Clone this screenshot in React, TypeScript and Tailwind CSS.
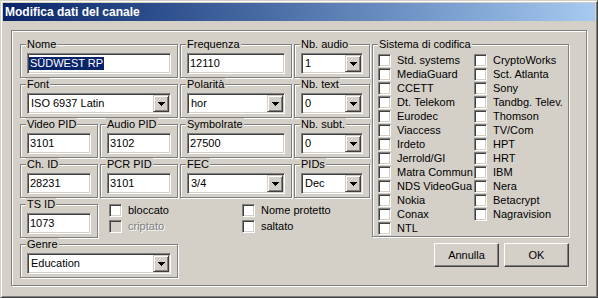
import React from "react"

const sunken = "border border-[#808080] border-b-white border-r-white shadow-[inset_1px_1px_0_#404040,inset_-1px_-1px_0_#d4d0c8]"
const raised = "border border-[#d4d0c8] border-b-[#404040] border-r-[#404040] shadow-[inset_1px_1px_0_#fff,inset_-1px_-1px_0_#808080]"

const Group = ({ label, className = "", children }: { label: string, className?: string, children?: React.ReactNode }) => (
    <div className={`relative shrink-0 border border-[#808080] shadow-[inset_1px_1px_0_#fff,1px_1px_0_#fff] ${className}`}>
        <span className="absolute left-[5px] top-[-7px] bg-[#d4d0c8] px-[1px] leading-[13px] whitespace-nowrap">{label}</span>
        {children}
    </div>
)

const Edit = ({ value, selected }: { value: string, selected?: boolean }) => (
    <div className={`h-[21px] bg-white flex items-center leading-[13px] ${selected ? 'pl-[1px]' : 'pl-[2px]'} ${sunken}`}>
        {selected ? <span className="bg-[#0a246a] text-white px-[1px]">{value}</span> : value}
    </div>
)

const Arrow = () => (
    <svg width="7" height="4" viewBox="0 0 7 4" shapeRendering="crispEdges">
        <path d="M0 0h7v1H0zM1 1h5v1H1zM2 2h3v1H2zM3 3h1v1H3z" fill="#000" />
    </svg>
)

const Combo = ({ value }: { value: string }) => (
    <div className={`h-[21px] bg-white flex items-center leading-[13px] pl-[3px] ${sunken}`}>
        <span className="flex-1 whitespace-nowrap">{value}</span>
        <div className={`w-[16px] h-[17px] mr-[1px] bg-[#d4d0c8] flex items-center justify-center ${raised}`}>
            <Arrow />
        </div>
    </div>
)

const Check = ({ label, disabled }: { label: string, disabled?: boolean }) => (
    <div className="flex items-start h-[14px] leading-[13px] whitespace-nowrap">
        <span className={`w-[13px] h-[13px] shrink-0 ${disabled ? 'bg-[#d4d0c8]' : 'bg-white'} ${sunken}`} />
        <span className={`ml-[6px] ${disabled ? 'text-[#808080] [text-shadow:1px_1px_0_#fff]' : ''}`}>{label}</span>
    </div>
)

const Button = ({ label }: { label: string }) => (
    <button className="w-[65px] h-[24px] bg-[#d4d0c8] leading-[13px] border border-white border-b-[#404040] border-r-[#404040] shadow-[inset_-1px_-1px_0_#808080]">
        {label}
    </button>
)

const col1 = ['Std. systems', 'MediaGuard', 'CCETT', 'Dt. Telekom', 'Eurodec', 'Viaccess', 'Irdeto', 'Jerrold/GI', 'Matra Commun', 'NDS VideoGua', 'Nokia', 'Conax', 'NTL']
const col2 = ['CryptoWorks', 'Sct. Atlanta', 'Sony', 'Tandbg. Telev.', 'Thomson', 'TV/Com', 'HPT', 'HRT', 'IBM', 'Nera', 'Betacrypt', 'Nagravision']

const field = "h-[34px] pt-[8px] px-[6px]"

export default function App() {
    return (
        <div className="w-[598px] h-[298px] bg-[#d4d0c8] p-[2px] text-[11px] text-black font-['Liberation_Sans',Arial,sans-serif] border border-[#d4d0c8] border-b-[#404040] border-r-[#404040] shadow-[inset_1px_1px_0_#fff,inset_-1px_-1px_0_#808080] overflow-hidden">
            {/* Titolo */}
            <div className="h-[18px] bg-gradient-to-r from-[#0a246a] to-[#a6caf0] flex items-center pl-[2px]">
                <span className="text-white font-bold text-[12px] leading-[18px]">Modifica dati del canale</span>
            </div>

            {/* Pannello */}
            <div className="ml-[8px] mt-[9px] w-[576px] h-[256px] border border-[#808080] shadow-[inset_1px_1px_0_#fff,1px_1px_0_#fff] pl-[8px] pt-[13px] flex">
                <div className="w-[350px] flex flex-col gap-[6px]">
                    <div className="flex gap-[2px]">
                        <Group label="Nome" className={`w-[158px] ${field}`}><Edit value="SÜDWEST RP" selected /></Group>
                        <Group label="Frequenza" className={`w-[112px] ${field}`}><Edit value="12110" /></Group>
                        <Group label="Nb. audio" className={`w-[76px] ${field}`}><Combo value="1" /></Group>
                    </div>
                    <div className="flex gap-[2px]">
                        <Group label="Font" className={`w-[158px] ${field}`}><Combo value="ISO 6937 Latin" /></Group>
                        <Group label="Polarità" className={`w-[112px] ${field}`}><Combo value="hor" /></Group>
                        <Group label="Nb. text" className={`w-[76px] ${field}`}><Combo value="0" /></Group>
                    </div>
                    <div className="flex gap-[2px]">
                        <Group label="Video PID" className={`w-[78px] ${field}`}><Edit value="3101" /></Group>
                        <Group label="Audio PID" className={`w-[78px] ${field}`}><Edit value="3102" /></Group>
                        <Group label="Symbolrate" className={`w-[112px] ${field}`}><Edit value="27500" /></Group>
                        <Group label="Nb. subt." className={`w-[76px] ${field}`}><Combo value="0" /></Group>
                    </div>
                    <div className="flex gap-[2px]">
                        <Group label="Ch. ID" className={`w-[78px] ${field}`}><Edit value="28231" /></Group>
                        <Group label="PCR PID" className={`w-[78px] ${field}`}><Edit value="3101" /></Group>
                        <Group label="FEC" className={`w-[112px] ${field}`}><Combo value="3/4" /></Group>
                        <Group label="PIDs" className={`w-[76px] ${field}`}><Combo value="Dec" /></Group>
                    </div>
                    <div className="flex">
                        <Group label="TS ID" className={`w-[78px] ${field}`}><Edit value="1073" /></Group>
                        <div className="ml-[11px] w-[133px] flex flex-col gap-[2px]">
                            <Check label="bloccato" />
                            <Check label="criptato" disabled />
                        </div>
                        <div className="flex flex-col gap-[2px]">
                            <Check label="Nome protetto" />
                            <Check label="saltato" />
                        </div>
                    </div>
                    <div className="flex">
                        <Group label="Genre" className={`w-[158px] ${field}`}><Combo value="Education" /></Group>
                    </div>
                </div>

                <div className="ml-[2px] w-[197px] flex flex-col">
                    <Group label="Sistema di codifica" className="h-[193px] pt-[9px] pl-[5px] flex">
                        <div className="w-[96px] flex flex-col overflow-hidden">
                            {col1.map((c) => <Check key={c} label={c} />)}
                        </div>
                        <div className="flex flex-col">
                            {col2.map((c) => <Check key={c} label={c} />)}
                        </div>
                    </Group>
                    <div className="mt-[6px] flex justify-end gap-[5px]">
                        <Button label="Annulla" />
                        <Button label="OK" />
                    </div>
                </div>
            </div>
        </div>
    )
}
